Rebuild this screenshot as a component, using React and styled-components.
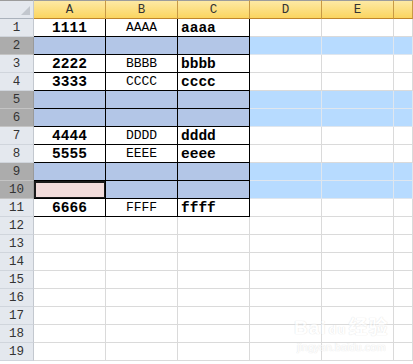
import React from "react"
import styled, { createGlobalStyle, css } from "styled-components"

const GlobalStyle = createGlobalStyle`
  html, body {
    margin: 0;
    padding: 0;
    background: #ffffff;
    overflow: hidden;
  }
`

const COLUMNS = ["A", "B", "C", "D", "E", ""]
const ROW_COUNT = 19
const SELECTED = [2, 5, 6, 9, 10]
const ACTIVE_ROW = 10

// values of A:C, keyed by row number
const DATA = {
  1: ["1111", "AAAA", "aaaa"],
  3: ["2222", "BBBB", "bbbb"],
  4: ["3333", "CCCC", "cccc"],
  7: ["4444", "DDDD", "dddd"],
  8: ["5555", "EEEE", "eeee"],
  11: ["6666", "FFFF", "ffff"]
}

const App = () => {
  const rows = Array.from({ length: ROW_COUNT }, (_, i) => i + 1)
  return (
    <>
      <GlobalStyle />
      <Frame>
        <Sheet>
          <Corner>
            <CornerMark />
          </Corner>
          {COLUMNS.map((c, i) => (
            <ColHeader key={"h" + i}>{c}</ColHeader>
          ))}
          {rows.map(r => {
            const selected = SELECTED.includes(r)
            const values = DATA[r]
            return (
              <React.Fragment key={r}>
                <RowHeader $selected={selected}>{r}</RowHeader>
                {COLUMNS.map((_, ci) => {
                  const inData = r <= 11 && ci < 3
                  const active = r === ACTIVE_ROW && ci === 0
                  return (
                    <Cell
                      key={ci}
                      $inData={inData}
                      $selected={selected}
                      $active={active}
                      $col={ci}
                    >
                      {values && ci < 3 && values[ci]}
                    </Cell>
                  )
                })}
              </React.Fragment>
            )
          })}
        </Sheet>
        <Watermark>
          <WatermarkBrand>
            Bai<Paw>du</Paw>经验
          </WatermarkBrand>
          <WatermarkUrl>jingyan.baidu.com</WatermarkUrl>
        </Watermark>
      </Frame>
    </>
  )
}

const Frame = styled.div`
  position: relative;
  width: 413px;
  height: 364px;
  overflow: hidden;
`

const Sheet = styled.div`
  display: grid;
  grid-template-columns: 34px repeat(5, 72px) 1fr;
  grid-template-rows: 19px repeat(${ROW_COUNT}, 18px) 18px;
  font-family: "Liberation Mono", "DejaVu Sans Mono", monospace;
`

const Corner = styled.div`
  position: relative;
  box-sizing: border-box;
  background: #e4e8ee;
  border-top: 1px solid #9c9c9c;
  border-right: 1px solid #c3c8cf;
  border-bottom: 1px solid #aab2bc;
`

const CornerMark = styled.div`
  position: absolute;
  right: 3px;
  bottom: 3px;
  width: 0;
  height: 0;
  border-left: 9px solid transparent;
  border-bottom: 9px solid #c2c7ce;
`

const ColHeader = styled.div`
  box-sizing: border-box;
  display: flex;
  align-items: center;
  justify-content: center;
  background: linear-gradient(#fde9a4, #fbd560);
  border-top: 1px solid #9c9c9c;
  border-right: 1px solid #c89a45;
  border-bottom: 1px solid #c0862c;
  color: #333333;
  font-size: 12.5px;
`

const RowHeader = styled.div`
  box-sizing: border-box;
  display: flex;
  align-items: center;
  justify-content: center;
  font-size: 12.5px;
  color: #333333;
  background: ${p => (p.$selected ? "#acacac" : "#e4e8ee")};
  border-right: 1px solid ${p => (p.$selected ? "#9a9a9a" : "#c3c8cf")};
  border-bottom: 1px solid ${p => (p.$selected ? "#c4c4c4" : "#d0d5dc")};
`

const Cell = styled.div`
  box-sizing: border-box;
  display: flex;
  align-items: center;
  justify-content: ${p => (p.$col === 2 ? "flex-start" : "center")};
  padding-left: ${p => (p.$col === 2 ? "3px" : "0")};
  font-size: ${p => (p.$col === 1 ? "13px" : "14.5px")};
  font-weight: ${p => (p.$col === 1 ? "normal" : "bold")};
  color: #000000;
  background: #ffffff;
  border-right: 1px solid #dadada;
  border-bottom: 1px solid #dadada;

  ${p =>
    p.$selected &&
    css`
      background: #b7dbff;
      border-color: #dfe6ee;
    `}

  ${p =>
    p.$inData &&
    css`
      border-color: #000000;
      background: ${p.$selected ? "#b3c6e7" : "#ffffff"};
    `}

  ${p =>
    p.$active &&
    css`
      background: #f2dcdb;
      box-shadow: inset 0 0 0 1px #1a1a1a, inset 1px 1px 0 1px #1a1a1a;
    `}
`

const Watermark = styled.div`
  position: absolute;
  left: 294px;
  top: 318px;
  display: flex;
  flex-direction: column;
  align-items: center;
  color: #ffffff;
  opacity: 0.6;
  font-family: "Liberation Sans", "Noto Sans CJK SC", sans-serif;
  text-shadow: 0 0 1px #d6d6d6, 0 0 1px #d6d6d6;
  pointer-events: none;
`

const WatermarkBrand = styled.div`
  font-size: 19px;
  font-weight: bold;
  line-height: 20px;
  letter-spacing: 1px;
`

const Paw = styled.span`
  font-size: 13px;
  margin: 0 2px;
`

const WatermarkUrl = styled.div`
  font-size: 11px;
  line-height: 14px;
`

export default App
